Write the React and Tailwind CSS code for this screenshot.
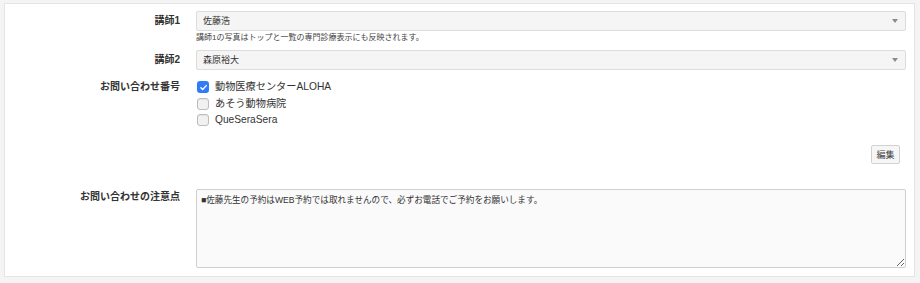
import React from 'react'

const FONT = { fontFamily: '"Liberation Sans", "Noto Sans CJK JP", sans-serif' }

function SelectBox({ value }) {
  return (
    <div className="h-[20px] bg-[#f5f5f5] border border-[#dcdcdc] rounded-[2px] flex items-center justify-between pl-[6px] pr-[7px]">
      <span className="text-[9px] leading-[12px] text-[#333]">{value}</span>
      <span className="w-0 h-0 border-l-[3px] border-r-[3px] border-t-[4px] border-l-transparent border-r-transparent border-t-[#8a8a8a]" />
    </div>
  )
}

function Check({ checked, label }) {
  return (
    <div className="h-[16.5px] flex items-center gap-[6px]">
      {checked ? (
        <span className="w-[12px] h-[12px] shrink-0 rounded-[3px] bg-[#2f7cf6] flex items-center justify-center">
          <svg width="9" height="9" viewBox="0 0 12 12" fill="none">
            <path d="M2.5 6.3l2.4 2.4 4.8-5.2" stroke="#fff" strokeWidth="1.9" strokeLinecap="round" strokeLinejoin="round" />
          </svg>
        </span>
      ) : (
        <span className="w-[12px] h-[12px] shrink-0 rounded-[3px] bg-[#f1f1f1] border border-[#bdbdbd] shadow-[inset_0_1px_1px_rgba(0,0,0,0.06)]" />
      )}
      <span className="text-[10.2px] leading-[14px] text-[#333]">{label}</span>
    </div>
  )
}

function Label({ children, className = '' }) {
  return (
    <div className={`w-[175px] shrink-0 text-right text-[10px] font-bold text-[#333] ${className}`}>
      {children}
    </div>
  )
}

export default function App() {
  return (
    <div className="min-h-screen bg-[#f4f4f4] pt-[3px] pl-[4px]" style={FONT}>
      <div className="w-[911px] h-[274px] bg-white border border-[#e4e4e4] pt-[7px] pr-[8px]">
        {/* 講師1 */}
        <div className="flex">
          <Label className="leading-[20px]">講師1</Label>
          <div className="flex-1 ml-[16px]">
            <SelectBox value="佐藤浩" />
            <p className="mt-[1px] text-[8px] leading-[12px] text-[#444]">講師1の写真はトップと一覧の専門診療表示にも反映されます。</p>
          </div>
        </div>

        {/* 講師2 */}
        <div className="flex mt-[6px]">
          <Label className="leading-[20px]">講師2</Label>
          <div className="flex-1 ml-[16px]">
            <SelectBox value="森原裕大" />
          </div>
        </div>

        {/* お問い合わせ番号 */}
        <div className="flex mt-[9px]">
          <Label className="leading-[16.5px]">お問い合わせ番号</Label>
          <div className="flex-1 ml-[16px] pl-[1px]">
            <Check checked label="動物医療センターALOHA" />
            <Check label="あそう動物病院" />
            <Check label="QueSeraSera" />
          </div>
        </div>

        {/* 編集 */}
        <div className="flex justify-end mt-[16.5px] pr-[6px]">
          <button className="h-[19px] w-[29px] bg-[#f6f6f6] border border-[#d2d2d2] rounded-[2px] text-[9px] leading-[12px] text-[#444]">
            編集
          </button>
        </div>

        {/* お問い合わせの注意点 */}
        <div className="flex mt-[25px]">
          <Label className="leading-[16px]">お問い合わせの注意点</Label>
          <div className="flex-1 ml-[16px]">
            <textarea
              readOnly
              defaultValue="■佐藤先生の予約はWEB予約では取れませんので、必ずお電話でご予約をお願いします。"
              className="block w-full h-[79px] bg-[#fafafa] border border-[#cfcfcf] rounded-[2px] px-[4px] py-[4px] text-[8.6px] leading-[12px] text-[#333] outline-none"
            />
          </div>
        </div>
      </div>
    </div>
  )
}
